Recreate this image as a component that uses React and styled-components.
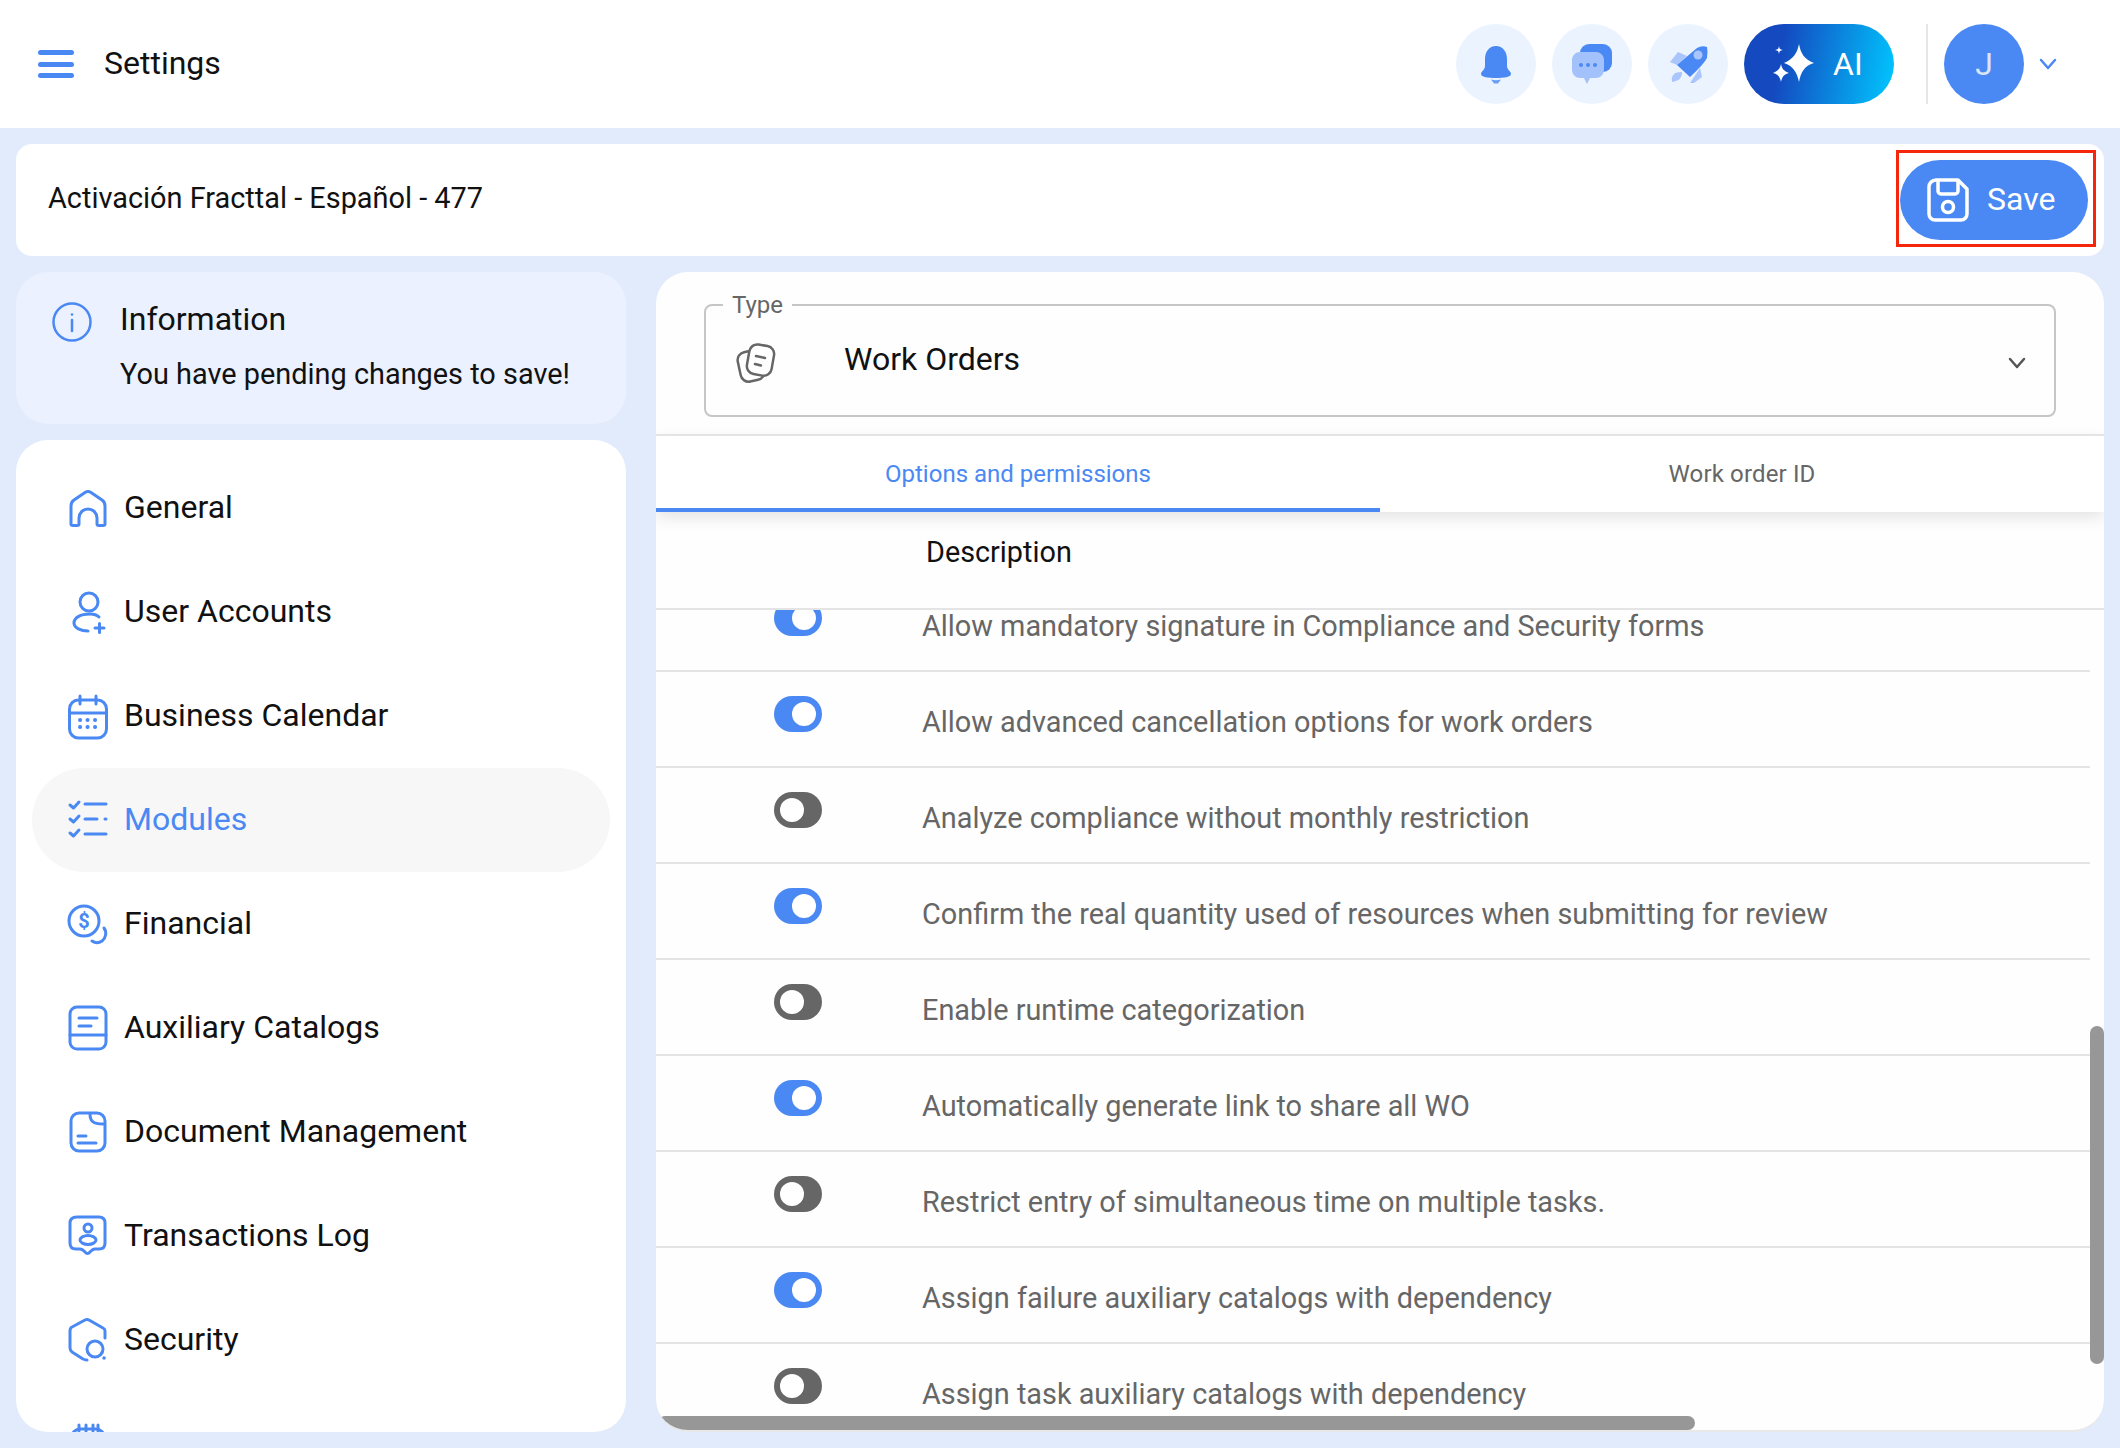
import React from 'react'
import styled, { createGlobalStyle } from 'styled-components'

const BLUE = '#4a89f3'

const GlobalStyle = createGlobalStyle`
html, body {
  margin: 0;
  padding: 0;
  height: 1448px;
  overflow: hidden;
  background: #e2ebfc;
  font-family: Roboto, "Liberation Sans", sans-serif;
}
* { box-sizing: border-box; }
`

const Page = styled.div`
width: 2120px;
height: 1448px;
display: flex;
flex-direction: column;
`

const Header = styled.header`
height: 128px;
background: #fff;
display: flex;
align-items: center;
padding: 0 62px 0 38px;
flex-shrink: 0;
`

const Burger = styled.div`
width: 36px;
height: 28px;
display: flex;
flex-direction: column;
justify-content: space-between;
margin-right: 30px;
span {
  display: block;
  height: 5px;
  border-radius: 3px;
  background: ${BLUE};
}
`

const PageTitle = styled.div`
font-size: 32px;
color: #111;
flex: 1;
padding-bottom: 2px;
`

const RoundButton = styled.div`
width: 80px;
height: 80px;
border-radius: 50%;
background: #ebf3fe;
display: flex;
align-items: center;
justify-content: center;
margin-right: 16px;
`

const AiButton = styled.div`
width: 150px;
height: 80px;
border-radius: 40px;
background: linear-gradient(100deg, #1449c0 25%, #00c8ff 100%);
color: #fff;
font-size: 32px;
display: flex;
align-items: center;
padding-left: 28px;
gap: 15px;
`

const VDivider = styled.div`
width: 2px;
height: 80px;
background: #e6e6e6;
margin: 0 16px 0 32px;
`

const Avatar = styled.div`
width: 80px;
height: 80px;
border-radius: 50%;
background: ${BLUE};
color: #dbe6fb;
font-size: 32px;
display: flex;
align-items: center;
justify-content: center;
margin-right: 14px;
`

const Content = styled.div`
flex: 1;
min-height: 0;
display: flex;
flex-direction: column;
padding: 16px 16px 16px;
gap: 16px;
`

const TitleBar = styled.div`
height: 112px;
flex-shrink: 0;
background: #fff;
border-radius: 16px;
display: flex;
align-items: center;
justify-content: space-between;
padding: 0 16px 0 32px;
font-size: 28.9px;
color: #111;
`

const TitleText = styled.div`
padding-bottom: 4px;
`

const SaveWrap = styled.div`
position: relative;
&::after {
  content: '';
  position: absolute;
  left: -4px;
  right: -8px;
  top: -10px;
  bottom: -7px;
  border: 3px solid #f5260b;
}
`

const SaveButton = styled.div`
width: 188px;
height: 80px;
border-radius: 40px;
background: ${BLUE};
color: #fff;
font-size: 32px;
display: flex;
align-items: center;
padding-left: 27px;
gap: 18px;
span { padding-bottom: 2px; }
`

const Columns = styled.div`
flex: 1;
min-height: 0;
display: grid;
grid-template-columns: 610px 1448px;
gap: 30px;
`

const LeftColumn = styled.div`
display: flex;
flex-direction: column;
gap: 16px;
min-height: 0;
`

const InfoCard = styled.div`
height: 152px;
flex-shrink: 0;
background: #ebf1fe;
border-radius: 32px;
display: flex;
padding: 30px 0 0 36px;
gap: 28px;
`

const InfoTitle = styled.div`
font-size: 32px;
line-height: 32px;
color: #111;
margin: 1px 0 23px;
`

const InfoText = styled.div`
font-size: 28.9px;
line-height: 32px;
color: #111;
`

const NavPanel = styled.nav`
flex: 1;
min-height: 0;
background: #fff;
border-radius: 32px;
overflow: hidden;
padding: 16px 16px 0;
`

const NavItem = styled.div`
height: 104px;
border-radius: 52px;
display: flex;
align-items: center;
padding-left: 36px;
gap: 16px;
font-size: 32px;
color: ${props => props.$active ? BLUE : '#111'};
background: ${props => props.$active ? '#f7f7f7' : 'transparent'};
svg { flex-shrink: 0; overflow: visible; }
span { padding-bottom: 2px; }
`

const RightPanel = styled.section`
position: relative;
background: #fefefe;
border-radius: 32px;
border-bottom: 2px solid #e8e8e8;
overflow: hidden;
display: flex;
flex-direction: column;
min-height: 0;
`

const TypeField = styled.fieldset`
margin: 19px 48px 0;
padding: 0 27px 0 30px;
height: 126px;
border: 2px solid #c6c6c6;
border-radius: 8px;
flex-shrink: 0;
`

const TypeLegend = styled.legend`
margin-left: -13px;
padding: 0 9px;
font-size: 24px;
line-height: 28px;
color: #666;
`

const TypeRow = styled.div`
height: 87px;
display: flex;
align-items: center;
`

const TypeValue = styled.div`
flex: 1;
margin-left: 68px;
font-size: 32px;
color: #111;
padding-bottom: 8px;
`

const Tabs = styled.div`
margin-top: 17px;
height: 78px;
flex-shrink: 0;
border-top: 2px solid #e4e4e4;
display: flex;
box-shadow: 0 6px 14px rgba(0,0,0,0.1);
position: relative;
z-index: 1;
background: #fff;
`

const Tab = styled.div`
flex: 1;
display: flex;
align-items: center;
justify-content: center;
padding-top: 4px;
font-size: 24px;
letter-spacing: ${props => props.$active ? '0' : '0.15px'};
color: ${props => props.$active ? BLUE : '#666'};
border-bottom: 4px solid ${props => props.$active ? BLUE : 'transparent'};
`

const TableHead = styled.div`
height: 98px;
flex-shrink: 0;
border-bottom: 2px solid #e4e4e4;
padding: 22px 0 0 270px;
font-size: 28.8px;
line-height: 36px;
color: #111;
`

const RowsClip = styled.div`
flex: 1;
min-height: 0;
overflow: hidden;
`

const Rows = styled.div`
margin-top: -34px;
margin-right: 14px;
`

const Row = styled.div`
height: 96px;
border-bottom: 2px solid #e4e4e4;
display: flex;
align-items: flex-start;
padding: 24px 0 0 118px;
`

const RowText = styled.div`
margin-left: 100px;
padding-top: 8px;
font-size: 28.85px;
line-height: 36px;
color: #666;
`

const Toggle = styled.div`
width: 48px;
height: 36px;
border-radius: 18px;
flex-shrink: 0;
background: ${props => props.$on ? BLUE : '#666'};
display: flex;
align-items: center;
justify-content: ${props => props.$on ? 'flex-end' : 'flex-start'};
padding: 0 6px;
&::after {
  content: '';
  width: 24px;
  height: 24px;
  border-radius: 50%;
  background: #fff;
}
`

const VScroll = styled.div`
position: absolute;
right: 0;
top: 754px;
width: 14px;
height: 338px;
border-radius: 7px;
background: #979797;
z-index: 2;
`

const HScroll = styled.div`
position: absolute;
left: 2px;
bottom: 0;
width: 1037px;
height: 14px;
border-radius: 7px;
background: #979797;
z-index: 2;
`

const BellIcon = () => (
  <svg width="40" height="40" viewBox="0 0 40 40">
    <path fill={BLUE} d="M20 2C27 2 31 8 31 15V22C31 26 35 27 35 30C35 33 28 34 20 34C12 34 5 33 5 30C5 27 9 26 9 22V15C9 8 13 2 20 2z" />
    <path fill="#6a9ff5" d="M15 35.500q5 1.500 10 0l-3 4h-4z" />
  </svg>
)

const ChatIcon = () => (
  <svg width="44" height="44" viewBox="0 0 44 44">
    <rect x="10" y="2" width="32" height="28" rx="9" fill={BLUE} />
    <path fill="#a3c1fb" d="M10 10h16a8 8 0 0 1 8 8v10a8 8 0 0 1-8 8h-6l-3 6-3-6h-4a8 8 0 0 1-8-8V18a8 8 0 0 1 8-8z" />
    <circle cx="11" cy="23" r="2" fill={BLUE} />
    <circle cx="18" cy="23" r="2" fill={BLUE} />
    <circle cx="25" cy="23" r="2" fill={BLUE} />
  </svg>
)

const RocketIcon = () => (
  <svg width="44" height="44" viewBox="0 0 44 44">
    <path fill="#a9c5fb" d="M4 20l8-10 9 4-10 9z" />
    <path fill="#a9c5fb" d="M24 41l10-15 2 9-8 6z" />
    <path fill="#a9c5fb" d="M6 40c-1-7 2-10 10-10 0 6-3 9-10 10z" />
    <path fill={BLUE} d="M11 23L31 6q5-3 10-1 1 5 0 11-3 6-17 19z" />
    <circle cx="32" cy="13" r="4.500" fill="#a9c5fb" />
  </svg>
)

const Sparkles = () => (
  <svg width="46" height="46" viewBox="0 0 46 46">
    <path fill="#fff" d="M27 3c2 10 5 15 15 19-10 3-13 9-15 19-2-10-6-16-15-19 9-4 13-9 15-19z" />
    <path fill="#fff" d="M9 23c1 5 3 7 8 9-5 1-7 4-8 9-1-5-3-8-8-9 5-2 7-4 8-9z" />
    <path fill="#fff" d="M7 5c.5 3 1 3.500 4 4-3 .5-3.500 1-4 4-.5-3-1-3.500-4-4 3-.5 3.500-1 4-4z" />
  </svg>
)

const Chevron = ({ color, size = 20 }) => (
  <svg width={size} height={size} viewBox="0 0 20 20" fill="none" stroke={color} strokeWidth="2.500" strokeLinecap="round" strokeLinejoin="round">
    <path d="M3 6l7 8 7-8" />
  </svg>
)

const SaveIcon = () => (
  <svg width="42" height="44" viewBox="0 0 42 44" fill="none" stroke="#fff" strokeWidth="3.500" strokeLinejoin="round">
    <path d="M9 2h22l9 9v25a6 6 0 0 1-6 6H8a6 6 0 0 1-6-6V9a7 7 0 0 1 7-7z" />
    <path d="M11 2v11a3 3 0 0 0 3 3h14a3 3 0 0 0 3-3V2" />
    <circle cx="21" cy="29" r="5.500" />
  </svg>
)

const InfoIcon = () => (
  <svg width="40" height="40" viewBox="0 0 40 40" fill="none" stroke={BLUE} strokeWidth="2.500">
    <circle cx="20" cy="20" r="18.500" />
    <path d="M20 18v11" strokeLinecap="round" />
    <circle cx="20" cy="12.500" r="1.300" fill={BLUE} stroke="none" />
  </svg>
)

const TypeIcon = () => (
  <svg width="40" height="42" viewBox="0 0 40 42" fill="none" stroke="#666" strokeWidth="2.500" strokeLinecap="round" strokeLinejoin="round">
    <rect x="3" y="9" width="24" height="30" rx="8" transform="rotate(-12 15 24)" />
    <rect x="12" y="3" width="25" height="30" rx="8" transform="rotate(10 24 18)" fill="#fefefe" />
    <path d="M20 14l9 2M19 22l6 1.500" />
  </svg>
)

const navIcon = (children) => (
  <svg width="40" height="40" viewBox="0 0 40 40" fill="none" stroke={BLUE} strokeWidth="3" strokeLinecap="round" strokeLinejoin="round">
    {children}
  </svg>
)

const icons = {
  home: navIcon(<path d="M3 18q0-4 3-6l11-7.500q3-2 6 0L34 12q3 2 3 6v18q0 1.500-2 1.500h-4q-2 0-2-1.500v-6a9 9 0 0 0-18 0v6q0 1.500-2 1.500H5q-2 0-2-1.500z" />),
  user: navIcon(<>
    <circle cx="21" cy="10" r="9" />
    <path d="M31 25q-3-3-9-3C12 22 6 26 6 31c0 5 7 8 14 8" />
    <path d="M27 36h9M31.500 31.500v9" />
  </>),
  calendar: navIcon(<>
    <rect x="1.500" y="4" width="37" height="38" rx="9" />
    <path d="M1.500 17h37M12 0v8M28 0v8" />
    <path d="M12 24h.1M19.500 24h.1M27 24h.1M12 31h.1M19.500 31h.1M27 31h.1" strokeWidth="4" />
  </>),
  modules: navIcon(<>
    <path d="M2 5l3.500 3L11 2M2 19l3.500 3L11 16M2 33l3.500 3L11 30" />
    <path d="M17 4h21M17 19h12M37 19h1M17 34h21" />
  </>),
  financial: navIcon(<>
    <circle cx="16" cy="17" r="15" />
    <text x="16" y="24" textAnchor="middle" fontFamily="Roboto, sans-serif" fontWeight="700" fontSize="20" fill={BLUE} stroke="none">$</text>
    <path d="M36 24c3 4 2 10-2 13-3 2-7 2-10 0" />
  </>),
  catalogs: navIcon(<>
    <rect x="2" y="-1" width="36" height="42" rx="7" />
    <path d="M2 27h36M11 10h18M11 18h12" />
  </>),
  document: navIcon(<>
    <rect x="3" y="1" width="34" height="38" rx="8" />
    <path d="M22 2c0 7 3 10 13 10M10 24h8M10 31h18" />
  </>),
  transactions: navIcon(<>
    <path d="M9 1h22q6 0 6 6v20q0 6-6 6h-4q-2 0-4 2l-2 2q-1.500 1-3 0l-2-2q-2-2-4-2H8q-6 0-6-6V7q0-6 7-6z" />
    <circle cx="20" cy="12" r="4" />
    <ellipse cx="20" cy="24" rx="8" ry="4.500" />
  </>),
  security: navIcon(<>
    <path d="M37 18V11q0-2-2-3L21 0q-2-1-4 0L4 7q-2 1-2 4v17q0 2 2 4l11 7q2 1 4 1" />
    <circle cx="27" cy="29" r="8" />
    <path d="M36 38h.1" strokeWidth="3.500" />
  </>),
  api: navIcon(<>
    <rect x="4" y="5" width="32" height="34" rx="8" />
    <path d="M11 1v6M18 1v6M25 1v6M30 1v6" />
  </>),
}

const navItems = [
  { icon: 'home', label: 'General' },
  { icon: 'user', label: 'User Accounts' },
  { icon: 'calendar', label: 'Business Calendar' },
  { icon: 'modules', label: 'Modules', active: true },
  { icon: 'financial', label: 'Financial' },
  { icon: 'catalogs', label: 'Auxiliary Catalogs' },
  { icon: 'document', label: 'Document Management' },
  { icon: 'transactions', label: 'Transactions Log' },
  { icon: 'security', label: 'Security' },
  { icon: 'api', label: 'API Connections' },
]

const rows = [
  { on: true, text: 'Allow mandatory signature in Compliance and Security forms' },
  { on: true, text: 'Allow advanced cancellation options for work orders' },
  { on: false, text: 'Analyze compliance without monthly restriction' },
  { on: true, text: 'Confirm the real quantity used of resources when submitting for review' },
  { on: false, text: 'Enable runtime categorization' },
  { on: true, text: 'Automatically generate link to share all WO' },
  { on: false, text: 'Restrict entry of simultaneous time on multiple tasks.' },
  { on: true, text: 'Assign failure auxiliary catalogs with dependency' },
  { on: false, text: 'Assign task auxiliary catalogs with dependency' },
]

const App = () => {
  return (
    <Page>
      <GlobalStyle />
      <Header>
        <Burger><span /><span /><span /></Burger>
        <PageTitle>Settings</PageTitle>
        <RoundButton><BellIcon /></RoundButton>
        <RoundButton><ChatIcon /></RoundButton>
        <RoundButton><RocketIcon /></RoundButton>
        <AiButton><Sparkles />AI</AiButton>
        <VDivider />
        <Avatar>J</Avatar>
        <Chevron color={BLUE} />
      </Header>
      <Content>
        <TitleBar>
          <TitleText>Activación Fracttal - Español - 477</TitleText>
          <SaveWrap>
            <SaveButton><SaveIcon /><span>Save</span></SaveButton>
          </SaveWrap>
        </TitleBar>
        <Columns>
          <LeftColumn>
            <InfoCard>
              <InfoIcon />
              <div>
                <InfoTitle>Information</InfoTitle>
                <InfoText>You have pending changes to save!</InfoText>
              </div>
            </InfoCard>
            <NavPanel>
              {navItems.map(item => (
                <NavItem key={item.label} $active={item.active}>
                  {icons[item.icon]}
                  <span>{item.label}</span>
                </NavItem>
              ))}
            </NavPanel>
          </LeftColumn>
          <RightPanel>
            <TypeField>
              <TypeLegend>Type</TypeLegend>
              <TypeRow>
                <TypeIcon />
                <TypeValue>Work Orders</TypeValue>
                <Chevron color="#555" />
              </TypeRow>
            </TypeField>
            <Tabs>
              <Tab $active>Options and permissions</Tab>
              <Tab>Work order ID</Tab>
            </Tabs>
            <TableHead>Description</TableHead>
            <RowsClip>
              <Rows>
                {rows.map(row => (
                  <Row key={row.text}>
                    <Toggle $on={row.on} />
                    <RowText>{row.text}</RowText>
                  </Row>
                ))}
              </Rows>
            </RowsClip>
            <VScroll />
            <HScroll />
          </RightPanel>
        </Columns>
      </Content>
    </Page>
  )
}

export default App
